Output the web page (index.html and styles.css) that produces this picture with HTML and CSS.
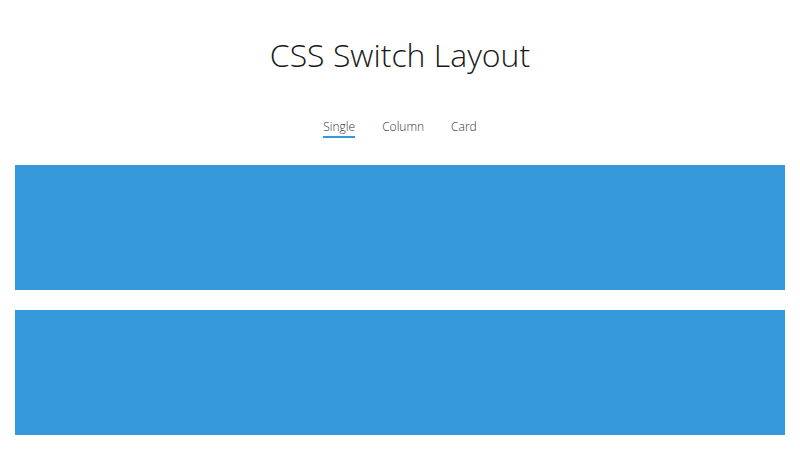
FILE: index.html
```html
<!DOCTYPE html>
<html>
<head>
<meta charset="utf-8">
<link rel="stylesheet" href="styles.css">
</head>
<body>
<h1 class="title">CSS Switch Layout</h1>
<nav class="tabs">
  <a class="tab active">Single</a>
  <a class="tab">Column</a>
  <a class="tab">Card</a>
</nav>
<div class="list">
  <div class="item"></div>
  <div class="item"></div>
</div>
</body>
</html>
```
FILE: styles.css
```css
html, body { margin: 0; padding: 0; background: #fff; }
body { font-family: "Open Sans", sans-serif; font-weight: 300; color: #222; }
.title {
  margin: 0;
  padding-top: 31px;
  text-align: center;
  font-size: 32px;
  font-weight: 300;
  line-height: 48px;
  color: #1a1a1a;
}
.tabs {
  display: flex;
  justify-content: center;
  gap: 27px;
  margin-top: 39px;
}
.tab {
  font-size: 12px;
  line-height: 18px;
  color: #333;
  border-bottom: 2px solid transparent;
}
.tab.active { border-bottom-color: #3498db; }
.list {
  display: flex;
  flex-direction: column;
  gap: 20px;
  padding: 0 15px;
  margin-top: 27px;
}
.item { height: 125px; background: #3498db; }
```
